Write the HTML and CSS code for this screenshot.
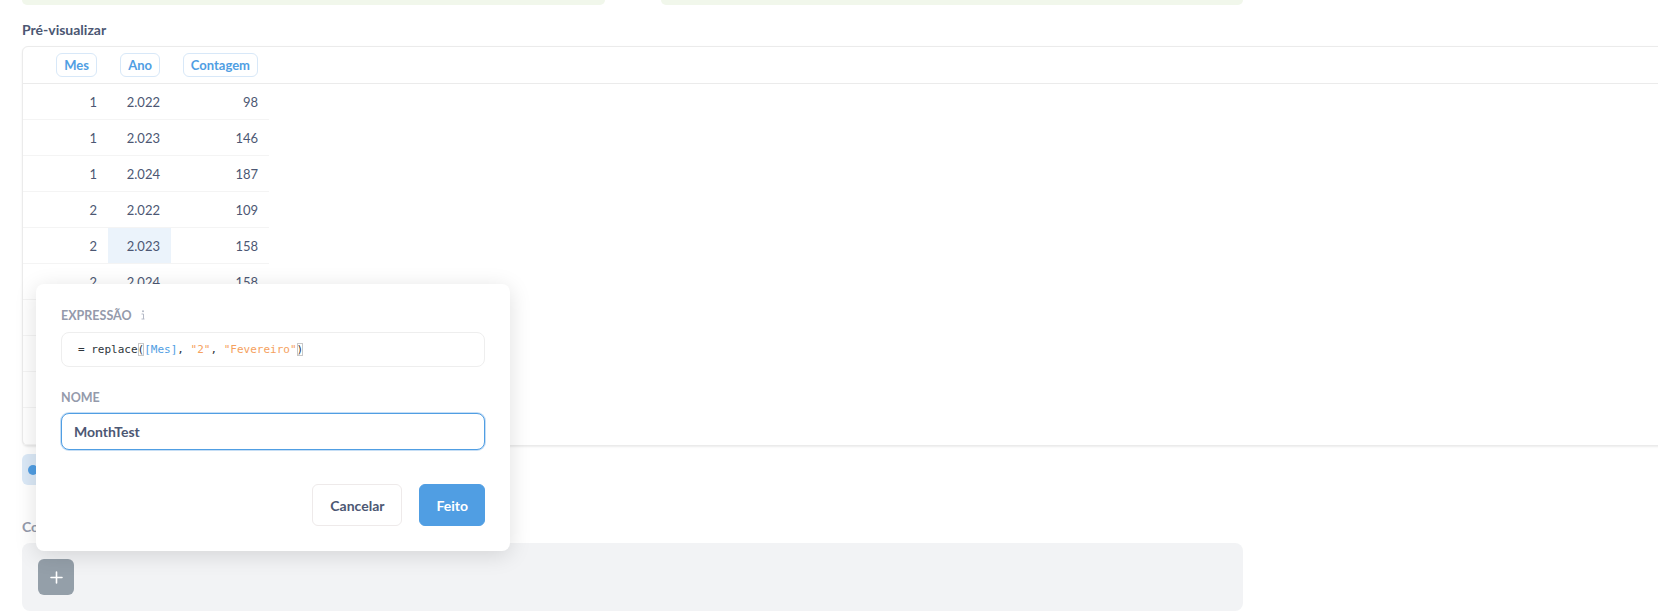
FILE: index.html
```html
<!DOCTYPE html>
<html lang="pt">
<head>
  <meta charset="UTF-8">
  <title>Pré-visualizar</title>
  <link rel="stylesheet" href="styles.css">
</head>
<body>
  <div class="steps">
    <div class="step-cards">
      <div class="green-card wide"></div>
      <div class="green-card"></div>
    </div>

    <h2 class="section-title">Pré-visualizar</h2>

    <div class="preview">
      <div class="preview-head">
        <div class="cell c1"><span class="chip">Mes</span></div>
        <div class="cell c2"><span class="chip">Ano</span></div>
        <div class="cell c3"><span class="chip">Contagem</span></div>
      </div>
      <div class="preview-body">
        <div class="row"><div class="cell c1">1</div><div class="cell c2">2.022</div><div class="cell c3">98</div></div>
        <div class="row"><div class="cell c1">1</div><div class="cell c2">2.023</div><div class="cell c3">146</div></div>
        <div class="row"><div class="cell c1">1</div><div class="cell c2">2.024</div><div class="cell c3">187</div></div>
        <div class="row"><div class="cell c1">2</div><div class="cell c2">2.022</div><div class="cell c3">109</div></div>
        <div class="row"><div class="cell c1">2</div><div class="cell c2 hover">2.023</div><div class="cell c3">158</div></div>
        <div class="row"><div class="cell c1">2</div><div class="cell c2">2.024</div><div class="cell c3">158</div></div>
        <div class="row"><div class="cell c1">3</div><div class="cell c2">2.022</div><div class="cell c3">121</div></div>
        <div class="row"><div class="cell c1">3</div><div class="cell c2">2.023</div><div class="cell c3">170</div></div>
        <div class="row"><div class="cell c1">3</div><div class="cell c2">2.024</div><div class="cell c3">164</div></div>
        <div class="row"><div class="cell c1">4</div><div class="cell c2">2.022</div><div class="cell c3">117</div></div>
      </div>
    </div>

    <div class="action-pill"><span class="dot"></span>Ordenar</div>

    <h2 class="section-title muted">Coluna personalizada</h2>
    <div class="step-box">
      <button class="add-btn" aria-label="Adicionar">
        <svg width="13" height="13" viewBox="0 0 13 13"><path d="M6.5 1v11M1 6.5h11" stroke="#fff" stroke-width="1.6" stroke-linecap="round"/></svg>
      </button>
    </div>
  </div>

  <div class="popover">
    <div class="field-label">Expressão
      <svg class="info" width="6" height="10" viewBox="0 0 6 10"><circle cx="3" cy="1.2" r="1" fill="#b4b9c6"/><path d="M1.5 4h2v5M1.5 9h3" stroke="#b4b9c6" stroke-width="1" fill="none"/></svg>
    </div>
    <div class="expr-box">
      <span class="tok">= replace</span><span class="match">(</span><span class="tok-field">[Mes]</span><span class="tok">, </span><span class="tok-str">"2"</span><span class="tok">, </span><span class="tok-str">"Fevereiro"</span><span class="match">)</span>
    </div>
    <div class="field-label second">Nome</div>
    <input class="name-input" type="text" value="MonthTest">
    <div class="popover-actions">
      <button class="btn">Cancelar</button>
      <button class="btn btn-primary">Feito</button>
    </div>
  </div>
</body>
</html>
```

FILE: styles.css
```css
body { margin: 0; background: #fff; font-family: Lato, "Noto Sans", sans-serif; color: #4c5773; overflow: hidden; }
.steps { padding-left: 22px; }

.step-cards { display: flex; gap: 56px; }
.green-card { width: 582px; height: 5px; background: #f1f7eb; border-radius: 0 0 8px 8px; }
.green-card.wide { width: 583px; }

.section-title { margin: 16px 0 8px; font-size: 14px; line-height: 17px; font-weight: 700; color: #4c5773; }
.section-title.muted { margin: 33px 0 8px; color: #949aab; }

.preview { width: 1700px; border: 1px solid #ebebeb; border-radius: 6px; box-shadow: 0 1px 2px rgba(0,0,0,0.08); background: #fff; }
.preview-head { display: flex; height: 36px; align-items: center; border-bottom: 1px solid #ebebeb; }
.row { display: flex; }
.cell { box-sizing: border-box; padding-right: 11px; text-align: right; font-size: 13px; }
.c1 { width: 85px; }
.c2 { width: 63px; }
.c3 { width: 98px; }
.row .cell { height: 36px; line-height: 36px; border-bottom: 1px solid #f4f4f4; }
.row:last-child .cell { height: 37px; }
.row .cell.hover { background: #ebf3fb; }
.chip { display: inline-block; padding: 0 7px; height: 22px; line-height: 22px; border: 1px solid #d8e8f8; border-radius: 6px; color: #509ee3; font-weight: 700; font-size: 13px; }

.action-pill { display: inline-flex; align-items: center; gap: 8px; margin-top: 8px; height: 31px; padding: 0 12px 0 6px; border-radius: 6px; background: #dbe9f7; color: #509ee3; font-weight: 700; font-size: 14px; }
.dot { width: 10px; height: 10px; border-radius: 50%; background: #509ee3; }

.step-box { width: 1221px; height: 68px; box-sizing: border-box; padding: 16px; background: #f2f3f5; border-radius: 8px; }
.add-btn { width: 36px; height: 36px; border: 0; border-radius: 6px; background: #949fa9; display: flex; align-items: center; justify-content: center; padding: 0; }

.popover { position: absolute; left: 36px; top: 284px; width: 474px; box-sizing: border-box; padding: 24px 25px 25px; background: #fff; border-radius: 8px; box-shadow: 0 4px 22px rgba(0,0,0,0.13); }
.field-label { font-size: 12.5px; line-height: 15px; font-weight: 700; color: #949aab; text-transform: uppercase; display: flex; align-items: center; gap: 8px; }
.field-label.second { margin-top: 23px; }
.info { margin-top: -2px; }

.expr-box { margin-top: 9px; height: 35px; box-sizing: border-box; border: 1px solid #eeeeee; border-radius: 8px; display: flex; align-items: center; padding-left: 16px; font-family: "DejaVu Sans Mono", "Liberation Mono", monospace; font-size: 11px; white-space: pre; color: #2e353b; }
.tok-field { color: #509ee3; }
.tok-str { color: #f5a15e; }
.match { outline: 1px solid #c8c8c8; outline-offset: -1px; }

.name-input { display: block; margin-top: 8px; width: 100%; height: 37px; box-sizing: border-box; border: 1px solid #509ee3; box-shadow: 0 0 0 1px #c6def5; border-radius: 8px; padding: 0 12px; font-family: Lato, sans-serif; font-size: 14px; font-weight: 700; color: #4c5773; outline: none; }

.popover-actions { display: flex; justify-content: flex-end; gap: 17px; margin-top: 34px; }
.btn { height: 42px; padding: 0 17px; border: 1px solid #eeeaea; border-radius: 6px; background: #fff; font-family: Lato, sans-serif; font-size: 14px; font-weight: 700; color: #4c5773; }
.btn-primary { padding: 0 16px; background: #509ee3; border-color: #509ee3; color: #fff; }
```
